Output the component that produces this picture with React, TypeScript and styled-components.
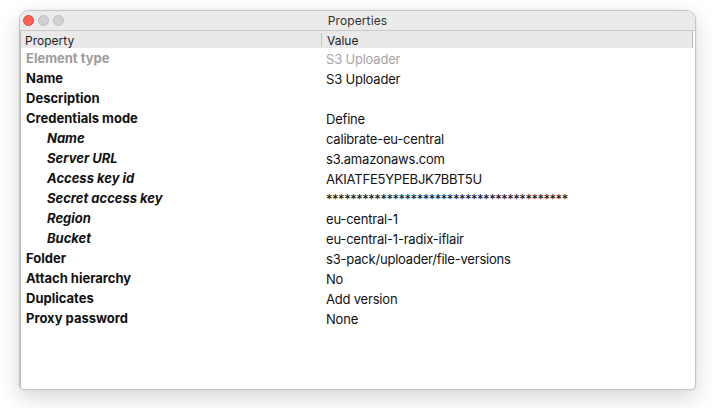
import React from "react";
import styled, { createGlobalStyle } from "styled-components";

const Global = createGlobalStyle`
  html, body { margin: 0; padding: 0; background: #ffffff; }
  body { font-family: Inter, "Liberation Sans", Arial, sans-serif; -webkit-font-smoothing: antialiased; }
`;

const Desktop = styled.div`
  width: 712px;
  height: 408px;
  padding: 10px 16px 18px 19px;
  box-sizing: border-box;
  display: flex;
`;

const Window = styled.div`
  flex: 1;
  display: flex;
  flex-direction: column;
  border: 1px solid #c6c6c6;
  border-radius: 10px 10px 5px 5px;
  background: #ffffff;
  overflow: hidden;
  box-shadow: 0 8px 22px rgba(0, 0, 0, 0.16), 0 0 2px rgba(0, 0, 0, 0.12);
`;

const TitleBar = styled.div`
  height: 19px;
  flex: none;
  display: grid;
  grid-template-columns: 1fr auto 1fr;
  align-items: center;
  padding: 0 3px;
  background: #ebebeb;
  border-bottom: 1px solid #c9c9c9;
`;

const Lights = styled.div`
  display: flex;
  gap: 4px;
`;

const Light = styled.span<{ $c: string; $b: string }>`
  width: 11px;
  height: 11px;
  border-radius: 50%;
  background: ${(p) => p.$c};
  box-sizing: border-box;
  border: 0.5px solid ${(p) => p.$b};
`;

const Title = styled.div`
  font-size: 12px;
  color: #333;
  letter-spacing: 0.1px;
`;

const Body = styled.div`
  flex: 1;
  display: flex;
  flex-direction: column;
  border-left: 1px solid #bdbdbd;
  margin-right: 2px;
`;

const HeaderRow = styled.div`
  height: 17px;
  display: grid;
  grid-template-columns: 300px 1fr;
  align-items: center;
  background: #e9e9e9;
  border-right: 1px solid #b5b5b5;
  font-size: 12px;
  color: #1e1e1e;
`;

const HeaderCell = styled.div<{ $divider?: boolean }>`
  padding-left: ${(p) => (p.$divider ? "5px" : "4px")};
  height: 14px;
  line-height: 15px;
  border-left: ${(p) => (p.$divider ? "1px solid #c4c4c4" : "none")};
`;

const Row = styled.div`
  height: 20px;
  display: grid;
  grid-template-columns: 300px 1fr;
  align-items: center;
  font-size: 13px;
`;

const Label = styled.div<{ $indent?: boolean; $dim?: boolean }>`
  padding-left: ${(p) => (p.$indent ? "26px" : "5px")};
  font-weight: 700;
  font-style: ${(p) => (p.$indent ? "italic" : "normal")};
  color: ${(p) => (p.$dim ? "#9d9d9d" : "#111")};
  margin-top: -1px;
`;

const Value = styled.div<{ $dim?: boolean; $secret?: boolean }>`
  padding-left: 5px;
  padding-top: 1px;
  letter-spacing: ${(p) => (p.$secret ? "-0.47px" : "-0.2px")};
  color: ${(p) => (p.$dim ? "#a5a5a5" : "#111")};
`;

type Item = {
  label: string;
  value: string;
  indent?: boolean;
  dim?: boolean;
  secret?: boolean;
};

const items: Item[] = [
  { label: "Element type", value: "S3 Uploader", dim: true },
  { label: "Name", value: "S3 Uploader" },
  { label: "Description", value: "" },
  { label: "Credentials mode", value: "Define" },
  { label: "Name", value: "calibrate-eu-central", indent: true },
  { label: "Server URL", value: "s3.amazonaws.com", indent: true },
  { label: "Access key id", value: "AKIATFE5YPEBJK7BBT5U", indent: true },
  { label: "Secret access key", value: "*".repeat(40), indent: true, secret: true },
  { label: "Region", value: "eu-central-1", indent: true },
  { label: "Bucket", value: "eu-central-1-radix-iflair", indent: true },
  { label: "Folder", value: "s3-pack/uploader/file-versions" },
  { label: "Attach hierarchy", value: "No" },
  { label: "Duplicates", value: "Add version" },
  { label: "Proxy password", value: "None" },
];

export default function App() {
  return (
    <>
      <Global />
      <Desktop>
        <Window>
          <TitleBar>
            <Lights>
              <Light $c="#fe5f57" $b="#e14640" />
              <Light $c="#d1d1d1" $b="#bdbdbd" />
              <Light $c="#d1d1d1" $b="#bdbdbd" />
            </Lights>
            <Title>Properties</Title>
            <div />
          </TitleBar>
          <Body>
            <HeaderRow>
              <HeaderCell>Property</HeaderCell>
              <HeaderCell $divider>Value</HeaderCell>
            </HeaderRow>
            {items.map((it, i) => (
              <Row key={i}>
                <Label $indent={it.indent} $dim={it.dim}>
                  {it.label}
                </Label>
                <Value $dim={it.dim} $secret={it.secret}>
                  {it.value}
                </Value>
              </Row>
            ))}
          </Body>
        </Window>
      </Desktop>
    </>
  );
}
